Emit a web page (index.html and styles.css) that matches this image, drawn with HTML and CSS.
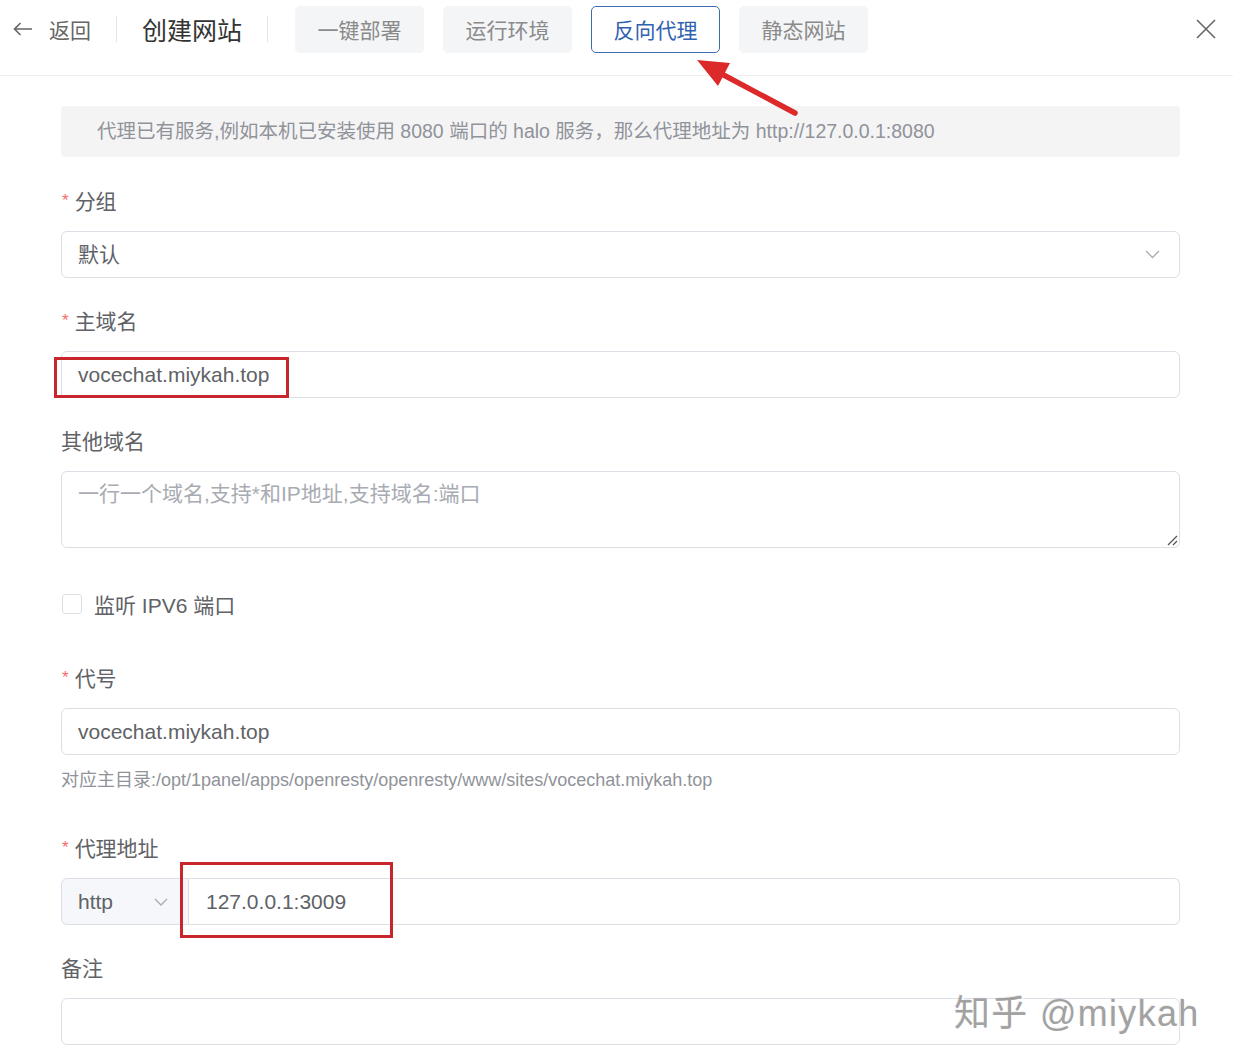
FILE: index.html
```html
<!DOCTYPE html>
<html lang="zh-CN">
<head>
    <meta charset="UTF-8">
    <title>创建网站</title>
    <link rel="stylesheet" href="styles.css">
</head>
<body>
    <div class="page">
        <div class="header">
            <a class="back">
                <svg width="20" height="14" viewBox="0 0 20 14"><path d="M19 7H1.5M7.5 1L1.5 7l6 6" fill="none" stroke="#666" stroke-width="1.6"/></svg>
                <span>返回</span>
            </a>
            <span class="divider"></span>
            <h1 class="title">创建网站</h1>
            <span class="divider"></span>
            <div class="tabs">
                <button class="tab">一键部署</button>
                <button class="tab">运行环境</button>
                <button class="tab active">反向代理</button>
                <button class="tab">静态网站</button>
            </div>
            <button class="close">
                <svg width="20" height="20" viewBox="0 0 20 20"><path d="M1 1l18 18M19 1L1 19" stroke="#666" stroke-width="1.6"/></svg>
            </button>
        </div>

        <!-- 标注箭头 -->
        <svg class="callout-arrow" width="130" height="75" viewBox="0 0 130 75">
            <path d="M115 63L38 22" stroke="#dc2a2a" stroke-width="5.5" stroke-linecap="round"/>
            <path d="M17 10L38 36L50 13Z" fill="#dc2a2a"/>
        </svg>

        <form class="site-form">
            <div class="alert">代理已有服务,例如本机已安装使用 8080 端口的 halo 服务，那么代理地址为 http://127.0.0.1:8080</div>

            <div class="form-item">
                <label class="item-label required">分组</label>
                <div class="select">
                    <span>默认</span>
                    <svg class="chevron" width="15" height="9" viewBox="0 0 15 9"><path d="M1 1l6.5 6.5L14 1" fill="none" stroke="#a8abb2" stroke-width="1.3"/></svg>
                </div>
            </div>

            <div class="form-item">
                <label class="item-label required">主域名</label>
                <div class="field">
                    <div class="input">vocechat.miykah.top</div>
                    <span class="mark mark-domain"></span>
                </div>
            </div>

            <div class="form-item">
                <label class="item-label">其他域名</label>
                <div class="textarea">
                    <span class="placeholder">一行一个域名,支持*和IP地址,支持域名:端口</span>
                    <svg class="resize" width="12" height="12" viewBox="0 0 12 12"><path d="M11 2L2 11M11 7L7 11" stroke="#555" stroke-width="1.3"/></svg>
                </div>
            </div>

            <div class="checkbox-row">
                <span class="checkbox"></span>
                <span>监听 IPV6 端口</span>
            </div>

            <div class="form-item">
                <label class="item-label required">代号</label>
                <div class="input">vocechat.miykah.top</div>
                <div class="help">对应主目录:/opt/1panel/apps/openresty/openresty/www/sites/vocechat.miykah.top</div>
            </div>

            <div class="form-item">
                <label class="item-label required">代理地址</label>
                <div class="input-group">
                    <div class="prepend">
                        <span>http</span>
                        <svg width="14" height="8" viewBox="0 0 14 8"><path d="M1 1l6 6 6-6" fill="none" stroke="#a8abb2" stroke-width="1.3"/></svg>
                    </div>
                    <div class="group-input">127.0.0.1:3009</div>
                    <span class="mark mark-proxy"></span>
                </div>
            </div>

            <div class="form-item">
                <label class="item-label">备注</label>
                <div class="input"></div>
            </div>
        </form>

        <div class="watermark">知乎 @miykah</div>
    </div>
</body>
</html>
```

FILE: styles.css
```css
* {
    margin: 0;
    padding: 0;
    box-sizing: border-box;
}

body {
    font-family: 'Liberation Sans', 'Noto Sans CJK SC', sans-serif;
    background: #fff;
    color: #606266;
    overflow: hidden;
}

.page {
    position: relative;
    width: 1233px;
    height: 1061px;
}

/* 顶部栏 */
.header {
    display: flex;
    align-items: center;
    height: 76px;
    padding: 0 17px 17px 13px;
    border-bottom: 1px solid #efefef;
}

.back {
    display: flex;
    align-items: center;
    gap: 16px;
    font-size: 21px;
    color: #666;
}

.divider {
    width: 1px;
    height: 26px;
    background: #e4e4e4;
    margin: 0 25px;
}

.title {
    font-size: 25px;
    font-weight: normal;
    color: #333;
}

.tabs {
    display: flex;
    gap: 19px;
    margin-left: 2px;
}

.tab {
    width: 129px;
    height: 47px;
    border: 1px solid #f4f5f7;
    border-radius: 5px;
    background: #f4f5f7;
    font-family: inherit;
    font-size: 21px;
    color: #8a8a8a;
}

.tab.active {
    background: #fff;
    border-color: #3d6cb3;
    color: #2f62b0;
}

.close {
    margin-left: auto;
    border: none;
    background: none;
    display: flex;
}

.callout-arrow {
    position: absolute;
    left: 680px;
    top: 50px;
}

/* 表单 */
.site-form {
    padding: 30px 53px 0 61px;
}

.alert {
    height: 51px;
    line-height: 51px;
    padding-left: 36px;
    background: #f4f4f5;
    border-radius: 4px;
    font-size: 19.5px;
    color: #909399;
    margin-bottom: 30px;
}

.form-item {
    margin-bottom: 29px;
}

.item-label {
    display: block;
    height: 30px;
    line-height: 30px;
    margin-bottom: 14px;
    font-size: 21px;
    color: #606266;
    overflow: hidden;
}

.item-label.required::before {
    content: '*';
    color: #f56c6c;
    font-size: 17px;
    margin-right: 6px;
    margin-left: 1px;
    vertical-align: 3px;
    line-height: 1;
}

.select,
.input,
.textarea {
    height: 47px;
    border: 1px solid #dcdfe6;
    border-radius: 6px;
    padding: 0 16px;
    font-size: 21px;
    color: #606266;
    line-height: 45px;
}

.select {
    display: flex;
    align-items: center;
    justify-content: space-between;
    padding-right: 19px;
}

.field {
    position: relative;
}

.textarea {
    position: relative;
    height: 77px;
    line-height: 30px;
    padding-top: 7px;
}

.placeholder {
    color: #a8abb2;
}

.resize {
    position: absolute;
    right: 1px;
    bottom: 1px;
}

.checkbox-row {
    display: flex;
    align-items: center;
    gap: 12px;
    height: 54px;
    margin-bottom: 33px;
    padding-left: 1px;
    font-size: 21px;
    color: #606266;
}

.checkbox {
    width: 20px;
    height: 20px;
    border: 1px solid #dcdfe6;
    border-radius: 3px;
}

.help {
    padding: 12px 0;
    line-height: 26px;
    font-size: 18px;
    color: #909399;
}

.input-group {
    position: relative;
    display: flex;
    height: 47px;
    font-size: 21px;
    color: #606266;
}

.prepend {
    width: 128px;
    display: flex;
    align-items: center;
    justify-content: space-between;
    padding: 0 20px 0 16px;
    background: #f5f7fa;
    border: 1px solid #dcdfe6;
    border-radius: 6px 0 0 6px;
}

.group-input {
    flex: 1;
    border: 1px solid #dcdfe6;
    border-left: none;
    border-radius: 0 6px 6px 0;
    padding-left: 17px;
    line-height: 45px;
}

/* 红色标注框 */
.mark {
    position: absolute;
    border: 3px solid #c9252d;
}

.mark-domain {
    left: -7px;
    top: 6px;
    width: 235px;
    height: 41px;
}

.mark-proxy {
    left: 119px;
    top: -16px;
    width: 213px;
    height: 76px;
}

.watermark {
    position: absolute;
    left: 954px;
    top: 984px;
    font-size: 36px;
    font-family: 'Liberation Sans', 'Noto Sans CJK SC', sans-serif;
    color: rgba(150, 150, 150, 0.9);
    text-shadow: 2px 2px 0 rgba(255, 255, 255, 0.9), -1px -1px 0 rgba(0, 0, 0, 0.08);
    letter-spacing: 1.3px;
}
```
